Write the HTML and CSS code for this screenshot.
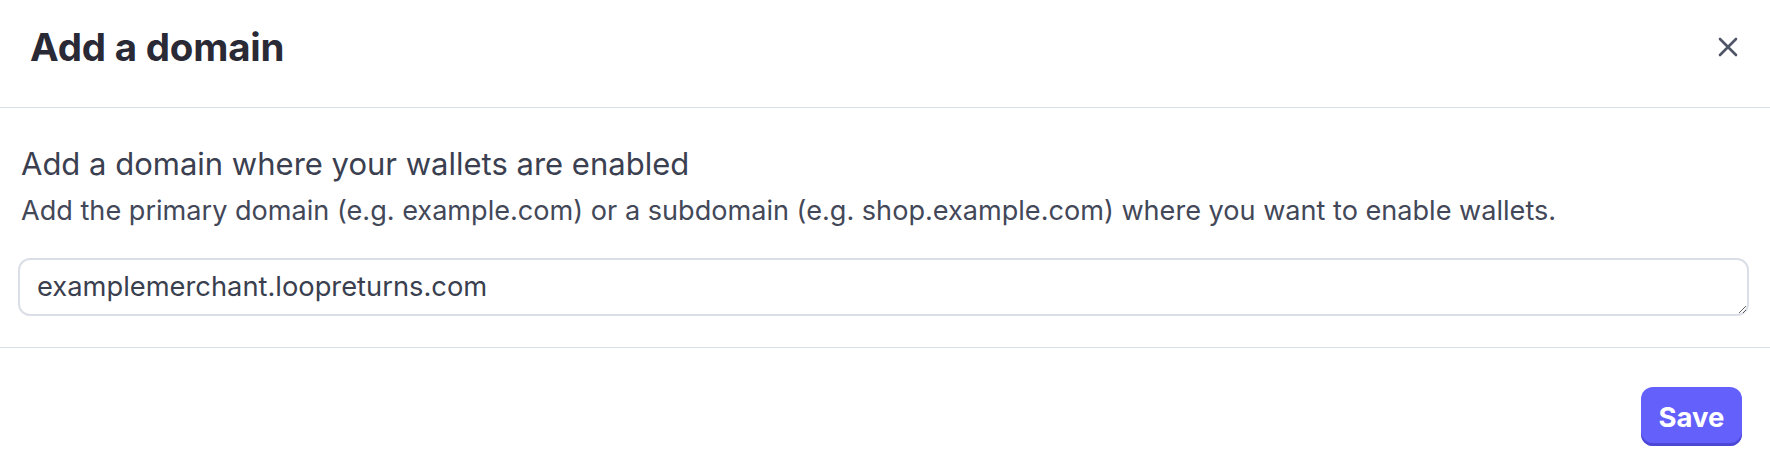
FILE: index.html
```html
<!DOCTYPE html>
<html lang="en">
<head>
<meta charset="utf-8">
<title>Add a domain</title>
<link rel="stylesheet" href="styles.css">
</head>
<body>
<div class="modal">
  <header class="modal-header">
    <h1 class="modal-title">Add a domain</h1>
    <button class="close-btn" aria-label="Close">
      <svg width="20" height="20" viewBox="0 0 20 20" fill="none" stroke="#4f5466" stroke-width="2.6" stroke-linecap="round">
        <path d="M2 2 L18 18 M18 2 L2 18"/>
      </svg>
    </button>
  </header>
  <section class="modal-body">
    <h2 class="body-heading">Add a domain where your wallets are enabled</h2>
    <p class="body-text">Add the primary domain (e.g. example.com) or a subdomain (e.g. shop.example.com) where you want to enable wallets.</p>
    <textarea class="domain-input" rows="1">examplemerchant.loopreturns.com</textarea>
  </section>
  <footer class="modal-footer">
    <button class="save-btn">Save</button>
  </footer>
</div>
</body>
</html>
```

FILE: styles.css
```css
* { box-sizing: border-box; }
html, body {
  margin: 0;
  padding: 0;
  background: #ffffff;
}
body {
  font-family: Inter, "Noto Sans", sans-serif;
  color: #3f4455;
  width: 1770px;
  height: 468px;
  overflow: hidden;
}
.modal {
  display: flex;
  flex-direction: column;
}
.modal-header {
  height: 108px;
  display: flex;
  align-items: center;
  justify-content: space-between;
  padding: 0 32px 13px 30px;
  border-bottom: 1px solid #dadee6;
}
.modal-title {
  margin: 0;
  font-size: 38.5px;
  font-weight: 700;
  color: #2a2a36;
  letter-spacing: -0.2px;
  line-height: 46px;
}
.close-btn {
  background: none;
  border: 0;
  padding: 0;
  width: 20px;
  height: 20px;
  display: flex;
}
.modal-body {
  padding: 36px 21px 31px 18px;
  border-bottom: 1px solid #dadee6;
  display: flex;
  flex-direction: column;
}
.body-heading {
  margin: 0 0 0 3px;
  font-size: 31px;
  font-weight: 400;
  color: #3b4051;
  line-height: 40px;
}
.body-text {
  margin: 9px 0 0 3px;
  font-size: 27.1px;
  line-height: 36px;
  color: #434859;
}
.domain-input {
  display: block;
  margin-top: 29px;
  height: 58px;
  width: 100%;
  border: 2px solid #dadee6;
  border-radius: 12px;
  padding: 10px 17px;
  font-family: Inter, "Noto Sans", sans-serif;
  font-size: 27.3px;
  line-height: 34px;
  color: #3a3f4f;
  resize: vertical;
  outline: none;
  overflow: hidden;
}
.modal-footer {
  display: flex;
  justify-content: flex-end;
  padding: 39px 28px 0 0;
}
.save-btn {
  width: 101px;
  height: 59px;
  border: 0;
  border-radius: 12px;
  background: #6460fc;
  box-shadow: inset 0 -3px 0 #4c48d6;
  color: #ffffff;
  font-family: Inter, "Noto Sans", sans-serif;
  font-size: 27.5px;
  font-weight: 700;
  padding: 0;
}
```
